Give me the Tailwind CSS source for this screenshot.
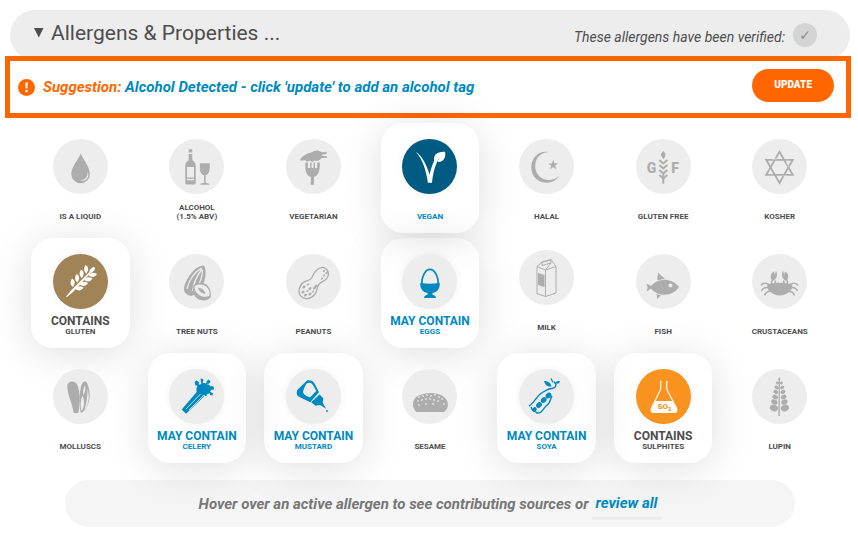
<!DOCTYPE html>
<html lang="en">
<head>
<meta charset="utf-8">
<meta name="viewport" content="width=device-width, initial-scale=1">
<title>Allergens &amp; Properties</title>
<script src="https://cdn.jsdelivr.net/npm/@tailwindcss/browser@4"></script>
</head>
<body class="bg-white font-['Roboto',sans-serif] text-[#4d4d4d]">
<main class="px-[5px] pt-[10px] pb-[7px]">
  <header class="-mb-1 ml-[5px] mr-[3px] flex h-[50px] items-center justify-between rounded-full bg-[#ededed] pb-1 pl-6 pr-[33px]">
    <h1>
      <button type="button" aria-expanded="true" class="flex items-center gap-[7px] text-[21px] leading-6">
        <svg class="size-[10px]" viewBox="0 0 10 10" fill="currentColor" aria-hidden="true"><path d="M0 0h9.500L4.800 9.500z"/></svg>
        Allergens &amp; Properties ...
      </button>
    </h1>
    <div class="flex items-center gap-2 pt-1">
      <span id="verified-label" class="pt-1 text-[14px] italic leading-5">These allergens have been verified:</span>
      <button type="button" aria-labelledby="verified-label" class="flex size-6 items-center justify-center rounded-full bg-[#d4d4d4] font-['DejaVu_Sans',sans-serif] text-[14px] leading-4 text-[#8f8f8f]">✓</button>
    </div>
  </header>

  <section class="mr-[2px] flex h-[62px] items-center border-5 border-[#ff6600] bg-white pl-2 pr-3">
    <svg class="size-[17px] shrink-0" viewBox="0 0 17 17" aria-hidden="true"><circle cx="8.500" cy="8.500" r="8.500" fill="#f60"/><path d="M7.200 3.500h2.600l-.4 6H7.600z" fill="#fff"/><circle cx="8.500" cy="12" r="1.300" fill="#fff"/></svg>
    <p class="ml-2 grow text-[15px] font-bold italic leading-5 text-[#0089c0]"><span class="text-[#ff6600]">Suggestion:</span> Alcohol Detected - click 'update' to add an alcohol tag</p>
    <button type="button" class="mb-1 h-[33px] rounded-full bg-[#ff6600] px-[22px] text-[10px] font-black leading-4 text-white">UPDATE</button>
  </section>

  <ul id="allergens" class="mt-[5px] grid grid-cols-7 gap-x-[18px] gap-y-[5px] pl-[26px] pr-[24px]"></ul>

  <footer class="ml-[60px] mr-[58px] mt-[17px] flex h-[47px] items-center justify-center gap-[3px] rounded-[24px] bg-black/4 text-[15px] font-bold italic leading-5 text-[#777]">
    <span>Hover over an active allergen to see contributing sources or</span>
    <a href="#allergens" class="border-b-3 border-[#ececec] px-1 pb-1 pt-[5px] text-[#0089c0]">review all</a>
  </footer>
</main>

<script>
const leaf = (x, y, r, rx, ry) => `<ellipse cx="${x}" cy="${y}" rx="${rx}" ry="${ry}" transform="rotate(${r} ${x} ${y})"/>`;
const icons = {
  liquid: '<path d="M27.700 14.500C25 21 18.300 28 18.300 35a9.300 9.300 0 0 0 18.600 0C36.900 28 30.500 21 27.700 14.500z"/><path d="M34.600 32.500c.6 4.500-2 8.200-7.200 9 6 1.300 9.600-4 7.200-9z" fill="#ededed"/>',
  alcohol: '<path d="M19.700 10.500q1.800-1 3.600 0v3h-3.600zM19.700 15h3.600v5c.3 2.500 3.400 3 3.400 6v18q0 1.500-1.500 1.500h-7.400q-1.500 0-1.500-1.500V26c0-3 3.100-3.500 3.400-6z"/><path d="M18 28h7v10.500h-7zM18 39.800h7v1.500h-7z" fill="#ededed"/><path d="M31 24.200h9.600c.6 6 .1 11-4 12v7.600l3.600 1v1h-8.800v-1l3.600-1v-7.600c-4.100-1-4.600-6-4-12z"/>',
  vegetarian: '<path d="M14.300 20c3-3.500 6.700-6 11-6.500 3.200-2.500 7.700-2.800 10-.3l5.200-.2v2l-4.200.5v1.500l4.500.2v1.700l-5.200.2c-2 2.500-4.800 3.500-7.400 2.500l-1.800 1.300-2.500-1.400-2.600 1.200-2-1.400-5 .4z"/><path d="M19.300 23.500h2.600V29h2.200v-5.500h1.500V29h1.900v-5.500H29V29h2.200v-5.500h2.600c.2 7-.5 13-5.800 14.500v7.700h-3.200V38c-5.300-1.500-5.700-7.500-5.500-14.500z"/>',
  vegan: '<g fill="#fff"><path d="M13.700 13c6.300 3.500 10.500 12 13.900 22.500 1.400-6.500 3.400-12 6.400-17l2-1.500 1 2.500c-3.800 6-6 14.500-7 24.300h-4.100c-1.700-12-5.200-24-12.200-30.800z"/><path d="M32.300 22c-1.300-6 2.700-9.700 10.700-9.200.9 3.800-.2 8.700-4.600 10-1.200.3-2.200.2-2.900-.2l2-4.100z"/></g>',
  halal: '<path d="M29 13c-9 1-13.800 8-12.600 16.500 1.300 10 14 16 23.800 7.500-3.500 5-8 6.900-13 6.700C18.500 43.500 12.300 37 12.300 28.300 12.300 19.500 19 11.500 29 13z"/><path d="m34.300 20.600 1.100 3.600h3.800L36.200 26.500l1.200 3.900-3.200-2.300-3.100 2.400 1.100-3.700-3.100-2.200 3.800-.2z"/>',
  glutenfree: '<g font-family="Roboto,sans-serif" font-weight="900" font-size="14" text-anchor="middle"><text x="15.500" y="34">G</text><text x="39" y="34">F</text></g><g fill="none" stroke="#adadad" stroke-width="2"><path d="M27.300 34v10.700"/><path d="m23.300 21 4 3.500 4-3.500m-8 5 4 3.500 4-3.500m-8 5 4 3.500 4-3.500m-8 5 4 3.500 4-3.500"/></g><path d="M27.300 12.500c2.500 2 2 5 0 7-2-2-2.500-5 0-7z" stroke="#adadad"/>',
  kosher: '<g fill="none" stroke="#adadad" stroke-width="1.800"><path d="M27.500 12.700 14.200 35.800h26.600z"/><path d="M14.200 20.800h26.600L27.500 43.900z"/></g><g stroke="#ededed" stroke-width=".7"><path d="m20 20 4.500 0M37 28l-2.200-4M20 36l-2.500-5M31 37h4.500"/></g>',
  gluten: '<g fill="#fff"><path d="M13 42.600 18.500 36 38 16.500l1 1L20 38l-6 5z"/>' +
    [[20, 33], [24.500, 28.500], [29, 24], [33.500, 19.500]].map(([x, y]) => `<path d="M${x} ${y}c-3-2-3-5-1-8.500 3.200 2 3.500 4.500 1 8.500z"/>`).join('') +
    [[22, 35], [26.500, 30.500], [31, 26], [35.500, 21.500]].map(([x, y]) => `<path d="M${x} ${y}c2-3 5-3.500 8.500-1.500-2.200 3.200-4.800 3.800-8.500 1.500z"/>`).join('') +
    leaf(39.3, 15.8, -45, 3.4, 1.8) + '</g>',
  treenuts: '<path d="M35 11.500c-8-.5-16.500 11-19.500 20-1.700 6 1 9.500 6.500 10.500 6-1 11.500-9 14-17 1.200-6 .5-12-1-13.500z"/><path d="M32.500 14C26 18 20 26 18 35m15-20c-4.500 6-8.500 14-9.500 22m10-21c0 7-3 14-7 20" fill="none" stroke="#ededed" stroke-width="1.300"/><path d="M24 32c4-4.500 11-4 14.500-.5 3 3 4 7.500 3 12-2.500 3-8 4.300-13 1.300C24.500 42 23 36 24 32z"/><path d="M25.500 32.600c3.500-3 9.300-2.500 12.200.4 3 3 3.500 6.200 2.500 9-3.500 1.500-8 1-11-1.700-2.500-2.300-4-5-3.700-7.700z" fill="#ededed"/><path d="M29 33.800c3.600.2 7 2.400 7.300 6.200-3.500-.4-6.500-2.600-7.300-6.200z"/>',
  peanuts: '<path d="M34.500 13.800c4.500-1.500 8.800 2.800 7.700 7.500-1 6-7 5.500-9.700 9.500-2 3-.7 6.200-4 10-4 4.700-10.500 5-13.600 1.300-3.500-4.500-1.700-11 3-14 3.500-2 6.300-1.200 8-4.600 1.500-3.500 3-8 8.600-9.700z" fill="none" stroke="#adadad" stroke-width="1.300"/>' + [[18,33],[24,34.500],[28.500,34],[19.500,41],[24,40],[17,38],[30,32]].map(([x,y]) => leaf(x, y, -35, 1.800, 1.100)).join('') + [[22,30.500],[27,37.500],[38,17],[40.500,19],[38,21.500],[36,24.500],[21.500,37]].map(([x,y]) => leaf(x, y, -35, 1.300, .8)).join(''),
  eggs: '<path d="M19.800 30c-.3-7 3.200-14.700 8.200-14.700S36.500 23 36.200 30" fill="#ededed" stroke="#0089c0" stroke-width="1.700"/><path d="M18.300 28.700q9.700 2 19.400 0c.6 5.800-2.600 9.400-7.200 10.300v1.800c2 .4 3.400 1.500 3.500 3.200H22c.1-1.700 1.500-2.800 3.500-3.200V39c-4.600-.9-7.800-4.500-7.200-10.300z"/>',
  milk: '<g fill="none" stroke="#adadad" stroke-width="1" stroke-linejoin="round"><path d="M18 16.500 26.500 20v26.500L18 43.600zM26.500 20 37 16.500V43l-10.500 3.500M18 16.500l5-4.500 9.500-2 4.500 6.500M26.500 20l5.500-7-9 2.500V12l9-2.500V13"/></g><path d="m19 23 6.500 2v12L19 35z"/>',
  fish: '<path d="M10.300 29.500 15 32c7-8.500 20-8.500 28 .8C37 43 22 43.300 15 34.500l-4.300 3 1-4z"/><path d="m22 18.700 7 6-7.800 1.500zM20.500 40l4.500 1.500-4 3.500z"/><circle cx="34.500" cy="31.500" r="2" fill="#ededed"/>',
  crab: '<path d="M15.500 30.500c6-2.500 18-2.500 24.500 0 2 4-4 11-12.300 11-8 0-14-7-12.200-11zM22.500 26.500h1.600V30h-1.600zM31 26.500h1.600V30H31z"/><path d="M24 16.500l-1.200 4.500-.8-3.500c-4 2-4 6.500-1.500 9.500 4.500-1.500 5.500-6.500 3.500-10.500zM31 16.500l1.200 4.500.8-3.500c4 2 4 6.500 1.500 9.500-4.500-1.500-5.500-6.500-3.500-10.500z"/><path d="M20.500 26c-1.500 2-1.500 4 1 6m13-6c1.500 2 1.500 4-1 6M18 31c-4-2.500-6.500-3-9 .5M18 34c-4-1-7-.5-8.500 3M20 37c-4 0-6.500 1-7.500 4.500M37 31c4-2.500 6.500-3 9 .5M37 34c4-1 7-.5 8.500 3M35 37c4 0 6.500 1 7.500 4.500" fill="none" stroke="#adadad" stroke-width="1.500"/>',
  molluscs: '<path d="M14.300 17c0-5 7.200-6.500 9.800-1.500 2.300 5 3.700 14 1.300 28-1.200 1-3.800.9-4.900-.1-1-9-6.200-17.400-6.200-26.400z"/><path d="M28.500 16c1.500-4 4.500-4.500 5.700-1.500 3.500 8 4.500 20-4.700 29h-2c-1.500-10-1.500-19 1-27.500z"/><path d="M34.500 20c2.500 8 1 16-3 20.500 2-6 3-13 3-20.500zM29.500 27c2 3 2.500 11-1 15-1.500-6-1.200-11 1-15zM32 16c1 4 0 8-2 10 0-4 .5-7 2-10z" fill="#ededed"/>',
  celery: '<path d="M12.700 40.500 28.500 22l6.500 5.500-18 17.200z"/><path d="m17 40 15.500-16M20 41l15-15" stroke="#ededed" stroke-width=".8"/><path d="M27.500 22.500c-.5-5 2-8 5-7 1-2 4-2 5 0 3-.5 5.500 2 4.500 5-.5 4-4 5-7 6-3-1-5.500-2-7.500-4z"/><path d="m30 18-2-3m5 2v-5m3 5 3-4m0 7 4-1m-4 4 3 1m-6-1 1 4" stroke="#0089c0" stroke-width="1.700"/><path d="m25.500 13 2-1.500 2.500 1.500-.5 3-3 .5zM31.500 9.500l2.500.5.500 2-2.500 1zM37.500 12l2.500-1.500 1.500 2.500-2 2zM42 17l2.500.5.500 3-3 .5zM41 23.500l3 .5-.5 2.500-2.500-.5z"/>',
  mustard: '<path d="M21 11.500c3-1 6 0 7.500 3l4.500 8.700-8.800 10L13.500 28c-3-1.500-3.300-4-2.200-7z"/><path d="M20.500 14.500c3.500-1.500 5-1 6.700 2l3 5.500-6 6.300c-3.500-1-6.700-2.500-7.200-5.300.5-3 2-6 3.500-8.500z" fill="#ededed"/><path d="m33.500 25.500 3.800 3.800-.6 4.500 3.300 6-6-3.800-4.500.7-4.300-3.500z"/><circle cx="41" cy="42" r=".9"/>',
  sesame: '<path d="M14.500 43c-5-4-5-13 2-16.500 7-3.500 17-3.500 23.500 0 7 4 8 12 2 16.500z"/>' + [[17,28],[21,27],[25,26],[29,27],[33,26],[37,28],[40,30],[16,32],[20,31],[24,30],[28,30],[32,31],[36,32],[24,35],[31,35],[17,36],[42,35]].map(([x,y],i) => leaf(x, y, i*40, 1.100, .7)).join('').replaceAll('/>', ' fill="#ededed"/>'),
  soya: '<path d="M10 37c3-1.500 5-5 8-8.500 3-5 7-6 12-8.500 4-.5 7-1 7-4.500l-2-3M12 38c2 6 4 3 6 6 5 .5 6-4 9-7 5-3 4-7 6-10" fill="none" stroke="#0089c0" stroke-width="1.400"/>' + leaf(29.500,26.500,-45,3.200,2.500) + leaf(24.700,31,-45,3.200,2.500) + leaf(20,36,-45,3.200,2.500) + leaf(15.500,40.500,-45,2.500,2) + '<path d="M25 12c5 0 7 2.500 7.500 5.500-4 .5-6-1-7.500-5.500zM36.500 14c.5-1.500 2.500-2.500 4.500-1.500-.5 2-2.500 3-4.500 1.500z"/><path d="m32 9.500 2 4" stroke="#0089c0" stroke-width="1.200"/>',
  sulphites: '<g fill="none" stroke="#fff" stroke-width="1.200"><path d="M24.700 11.700v8.500L15.500 39c-1.200 3 .3 4.500 2.500 4.500h20c2.200 0 3.700-1.500 2.500-4.500l-9.800-18.800v-8.500"/></g><path d="M19.500 32h16.700l4.300 8c.5 2.500-.5 4-2.500 4H18c-2.500 0-3.500-1.500-2.500-4z" fill="#fff"/><text x="28.500" y="40" font-family="Roboto,sans-serif" font-weight="900" font-size="8" text-anchor="middle" fill="#f7931e">SO<tspan font-size="6" dy="2">2</tspan></text>',
  lupin: '<path d="M26.700 9h1.200v38h-1.500z"/>' + leaf(27.300,10,0,1,1.500) + [[14,2,1.500],[18.500,2.800,2],[23,3.500,2.300],[28,4.200,2.600],[33,5,3],[39,5.500,3.800]].map(([y,d,r]) => leaf(27.400-d, y, 25, r*1.100, r*.85) + leaf(27.400+d, y, -25, r*1.100, r*.85)).join('')
};

const allergens = [
  ['liquid', 'Is a liquid'], ['alcohol', 'Alcohol<br>(1.5% ABV)'], ['vegetarian', 'Vegetarian'], ['vegan', 'Vegan', 'yes'], ['halal', 'Halal'], ['glutenfree', 'Gluten free'], ['kosher', 'Kosher'],
  ['gluten', 'Gluten', 'contains'], ['treenuts', 'Tree nuts'], ['peanuts', 'Peanuts'], ['eggs', 'Eggs', 'may'], ['milk', 'Milk', 'raised'], ['fish', 'Fish'], ['crab', 'Crustaceans'],
  ['molluscs', 'Molluscs'], ['celery', 'Celery', 'may'], ['mustard', 'Mustard', 'may'], ['sesame', 'Sesame'], ['soya', 'Soya', 'may'], ['sulphites', 'Sulphites', 'contains'], ['lupin', 'Lupin']
];
const discs = { vegan: 'bg-[#005b82]', gluten: 'bg-[#a08458]', sulphites: 'bg-[#f7931e]' };
const states = {
  yes: { card: 'pt-4 text-[#0089c0] shadow-[0_5px_40px_rgba(0,0,0,0.13)]', fill: '#fff', note: '' },
  contains: { card: 'pt-4 shadow-[0_5px_40px_rgba(0,0,0,0.13)]', fill: '#fff', note: 'Contains' },
  may: { card: 'pt-4 text-[#0089c0] shadow-[0_5px_40px_rgba(0,0,0,0.13)]', fill: '#0089c0', note: 'May contain' },
  raised: { card: 'pt-3', fill: '#adadad', note: '' },
  off: { card: 'pt-4', fill: '#adadad', note: '' }
};

document.getElementById('allergens').innerHTML = allergens.map(([id, label, state = 'off']) => {
  const s = states[state];
  const shadow = s.card.includes('shadow') ? 'shadow-[0_0_8px_rgba(0,0,0,0.06)]' : '';
  return `<li><button type="button" class="flex h-[110px] w-full flex-col items-center rounded-[22px] uppercase ${s.card}">
    <svg class="size-[55px] shrink-0 rounded-full ${shadow} ${discs[id] || 'bg-[#ededed]'}" viewBox="0 0 55 55" fill="${s.fill}" aria-hidden="true">${icons[id]}</svg>
    <span class="flex h-[27px] flex-col items-center justify-end whitespace-nowrap text-[8px] font-bold leading-[9px]">
      ${s.note ? `<span class="text-[12px] leading-3">${s.note}</span>` : ''}<span>${label}</span>
    </span>
  </button></li>`;
}).join('');
</script>
</body>
</html>
